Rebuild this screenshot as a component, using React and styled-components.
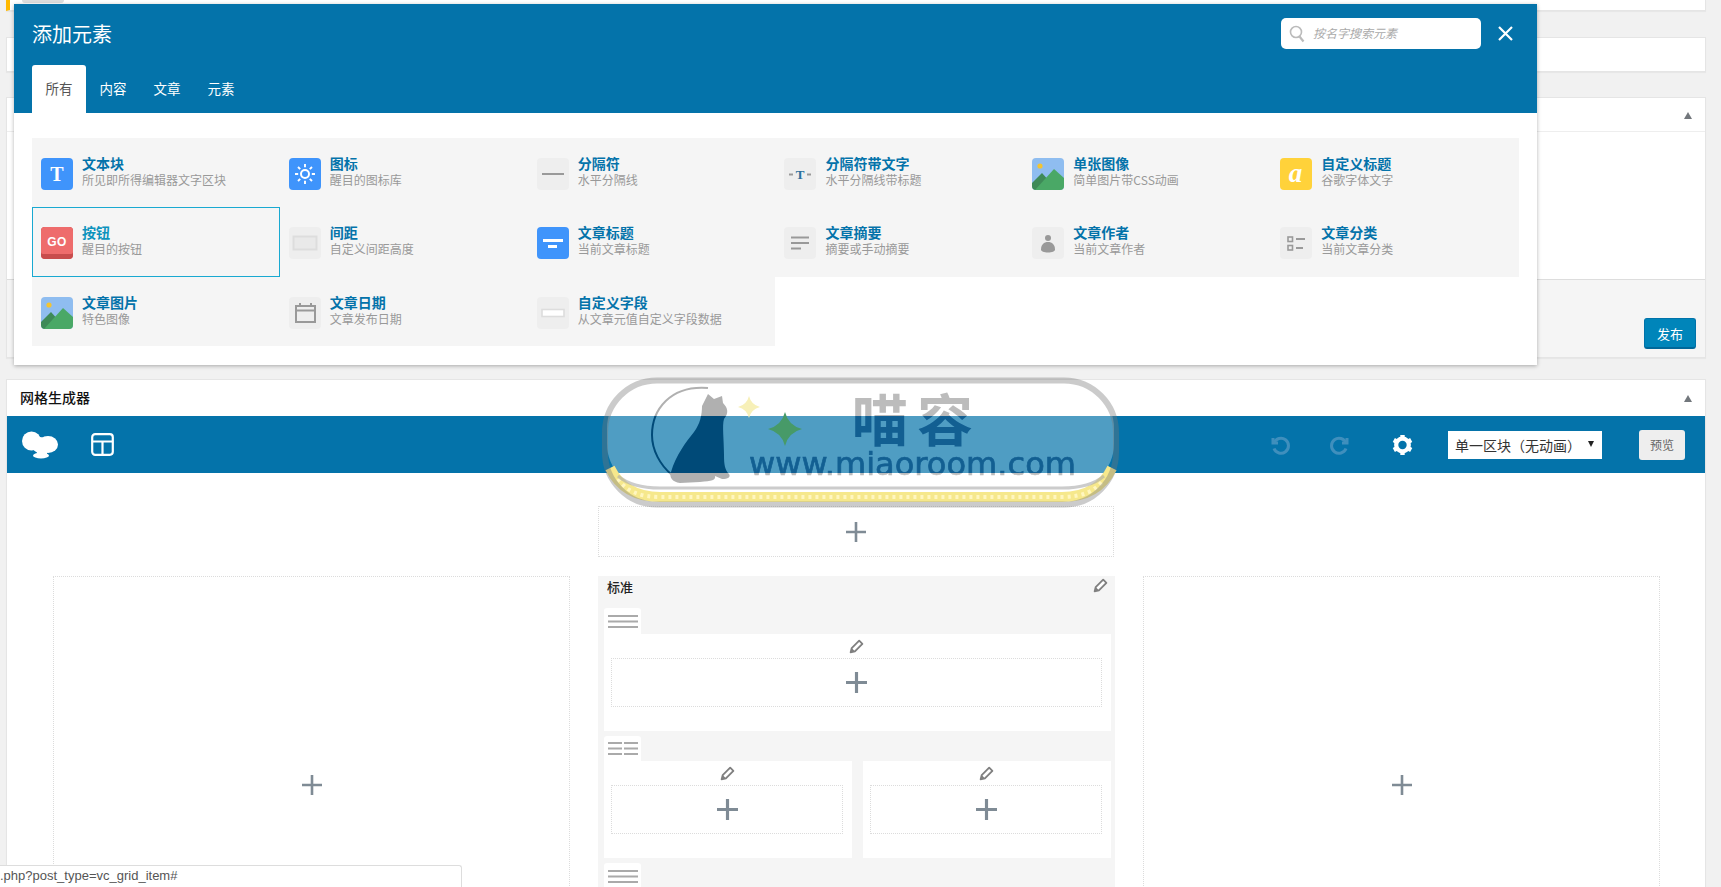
import React from 'react';
import styled, { createGlobalStyle } from 'styled-components';

const GlobalStyle = createGlobalStyle`
  html, body { margin: 0; padding: 0; background: #f1f1f1; }
  body { font-family: "Noto Sans CJK SC", "Liberation Sans", sans-serif; }
  * { box-sizing: border-box; }
`;

const Page = styled.div`
  position: relative;
  height: 887px;
  overflow: hidden;
  padding: 0 15px 0 6px;
  background: #f1f1f1;
`;

const Card = styled.section`
  background: #fff;
  border: 1px solid #e5e5e5;
  box-shadow: 0 1px 1px rgba(0, 0, 0, 0.04);
  margin-top: ${(p) => p.$top || 0}px;
`;

const NoticeCard = styled(Card)`
  height: 11px;
  border-left: 4px solid #ffb900;
  border-top: 0;
  padding-left: 12px;
`;

const GhostButton = styled.div`
  width: 42px;
  height: 3px;
  background: #ddd;
  border-radius: 0 0 3px 3px;
`;

const BlankCard = styled(Card)`
  height: 35px;
`;

const CardHead = styled.header`
  height: ${(p) => p.$h}px;
  display: flex;
  align-items: center;
  justify-content: space-between;
  padding: 0 13px 0 13px;
  border-bottom: ${(p) => (p.$line ? '1px solid #eee' : '0')};
`;

const CardTitle = styled.h3`
  margin: 0 0 3px;
  font-size: 14px;
  font-weight: 500;
  color: #111;
`;

const Toggle = styled.span`
  width: 0;
  height: 0;
  margin-top: ${(p) => p.$down || 0}px;
  border-left: 4px solid transparent;
  border-right: 4px solid transparent;
  border-bottom: 7px solid #72777c;
`;

const CardBody = styled.div`
  height: 147px;
`;

const CardFoot = styled.footer`
  height: 78px;
  background: #f5f5f5;
  border-top: 1px solid #ddd;
  display: flex;
  justify-content: flex-end;
  align-items: flex-end;
  padding: 0 9px 8px;
`;

const Publish = styled.button`
  width: 52px;
  height: 31px;
  padding: 0;
  border: 1px solid #0073aa;
  border-bottom: 2px solid #006799;
  border-radius: 3px;
  background: #0085ba;
  color: #fff;
  font: 13px "Noto Sans CJK SC", sans-serif;
`;

const Toolbar = styled.div`
  height: 57px;
  background: #0473aa;
  display: flex;
  align-items: center;
  padding: 0 20px 0 15px;
`;

const LayoutBtn = styled.span`
  display: flex;
  margin-left: 33px;
`;

const ToolRight = styled.div`
  margin-left: auto;
  display: flex;
  align-items: center;
`;

const HistoryGroup = styled.div`
  display: flex;
  gap: 40px;
  margin-right: 42px;
  color: #3f8fbd;
`;

const GearBtn = styled.span`
  display: flex;
  margin-right: 35px;
`;

const SelectWrap = styled.div`
  position: relative;
  width: 154px;
  height: 28px;
  margin-right: 37px;
  &::after {
    content: '';
    position: absolute;
    right: 8px;
    top: 10px;
    border-left: 3px solid transparent;
    border-right: 3px solid transparent;
    border-top: 6px solid #222;
    pointer-events: none;
  }
`;

const ModeSelect = styled.select`
  width: 100%;
  height: 100%;
  appearance: none;
  border: 0;
  border-radius: 0;
  background: #fff;
  color: #333;
  padding: 0 0 0 7px;
  font: 14px "Noto Sans CJK SC", sans-serif;
`;

const PreviewBtn = styled.button`
  width: 46px;
  height: 30px;
  padding: 0;
  border: 0;
  border-radius: 3px;
  background: #eee;
  color: #666;
  font: 12px "Noto Sans CJK SC", sans-serif;
`;

const Canvas = styled.div`
  height: 500px;
  background: #fff;
  padding-top: 33px;
`;

const DropBox = styled.div`
  display: flex;
  align-items: center;
  justify-content: center;
  border: 1px dotted #dcdcdc;
`;

const TopDrop = styled(DropBox)`
  width: 516px;
  height: 51px;
  margin: 0 auto 19px;
`;

const Columns = styled.div`
  display: grid;
  grid-template-columns: repeat(3, 1fr);
  gap: 28px;
  padding: 0 45px 0 46px;
  height: 400px;
`;

const TallDrop = styled(DropBox)`
  height: 418px;
`;

const MiddleCol = styled.div`
  background: #f5f5f5;
  padding: 0 4px 0 6px;
  height: 420px;
`;

const MiddleHead = styled.div`
  height: 32px;
  display: flex;
  align-items: flex-start;
  justify-content: space-between;
  padding: 2px 3px 0 3px;
  font-size: 13px;
  line-height: 17px;
  font-weight: 500;
  color: #222;
`;

const RowBlock = styled.div`
  margin-bottom: 5px;
`;

const Handle = styled.div`
  width: 37px;
  height: ${(p) => p.$h || 26}px;
  background: #fff;
  border-radius: 3px 3px 0 0;
  display: flex;
  align-items: center;
  justify-content: center;
`;

const RowCols = styled.div`
  display: flex;
  gap: 11px;
`;

const RowCell = styled.div`
  flex: 1;
  height: 97px;
  background: #fff;
  padding: 0 9px 0 7px;
`;

const PencilLine = styled.div`
  height: 24px;
  display: flex;
  align-items: center;
  justify-content: center;
`;

const CellDrop = styled(DropBox)`
  height: 49px;
`;

const Modal = styled.div`
  position: absolute;
  left: 14px;
  top: 4px;
  width: 1523px;
  height: 361px;
  background: #fff;
  box-shadow: 0 1px 4px rgba(0, 0, 0, 0.3);
`;

const ModalHead = styled.div`
  height: 109px;
  background: #0473aa;
  color: #fff;
  padding-left: 18px;
`;

const ModalTop = styled.div`
  height: 61px;
  display: flex;
  align-items: flex-start;
  padding: 14px 24px 0 0;
`;

const ModalTitle = styled.h2`
  margin: 0;
  font-size: 20px;
  font-weight: 400;
  line-height: 31px;
`;

const SearchBox = styled.div`
  margin-left: auto;
  width: 200px;
  height: 31px;
  background: #fff;
  border-radius: 5px;
  display: flex;
  align-items: center;
  gap: 6px;
  padding-left: 8px;
`;

const SearchInput = styled.input`
  flex: 1;
  min-width: 0;
  border: 0;
  outline: 0;
  padding: 0 0 2px 2px;
  background: transparent;
  font: italic 12px "Noto Sans CJK SC", sans-serif;
  &::placeholder { color: #aaa; opacity: 1; }
`;

const CloseBtn = styled.span`
  display: flex;
  margin: 8px 0 0 17px;
`;

const Tabs = styled.div`
  display: flex;
`;

const Tab = styled.div`
  width: 54px;
  height: 48px;
  padding-bottom: 2px;
  display: flex;
  align-items: center;
  justify-content: center;
  border-radius: 3px 3px 0 0;
  font-size: 13.5px;
  background: ${(p) => (p.$on ? '#fff' : 'transparent')};
  color: ${(p) => (p.$on ? '#555' : '#fff')};
`;

const ModalBody = styled.div`
  padding: 25px 18px 0 18px;
`;

const ElementGrid = styled.div`
  display: grid;
  grid-template-columns: repeat(6, 1fr);
  grid-auto-rows: 69.4px;
`;

const Item = styled.div`
  display: flex;
  gap: 9px;
  padding: 17px 8px 0 9px;
  background: #f5f5f5;
  box-shadow: ${(p) => (p.$on ? 'inset 0 0 0 1px #19a9d1' : 'none')};
`;

const IconBox = styled.span`
  flex: none;
  display: flex;
  width: 32px;
  height: 32px;
  margin-top: 3px;
  border-radius: 4px;
  overflow: hidden;
  background: ${(p) => p.$bg || '#eee'};
`;

const ItemText = styled.div`
  min-width: 0;
`;

const ItemTitle = styled.div`
  font-size: 14px;
  font-weight: 700;
  line-height: 17px;
  white-space: nowrap;
  color: ${(p) => (p.$on ? '#0d93bd' : '#0473aa')};
`;

const ItemSub = styled.div`
  font-size: 12px;
  line-height: 16px;
  white-space: nowrap;
  color: #999;
`;

const StatusBar = styled.div`
  position: absolute;
  left: 0;
  bottom: 0;
  width: 462px;
  height: 22px;
  background: #fff;
  border: 1px solid #ddd;
  border-width: 1px 1px 0 0;
  border-radius: 0 3px 0 0;
  font: 13px/20px "Liberation Sans", sans-serif;
  color: #555;
  white-space: nowrap;
`;

const WatermarkArt = styled.svg`
  position: absolute;
  left: 600px;
  top: 376px;
  width: 522px;
  height: 134px;
  pointer-events: none;
  filter: blur(0.5px);
`;

const Svg32 = ({ children }) => (
  <svg width="32" height="32" viewBox="0 0 32 32">{children}</svg>
);

const glyph = { fontFamily: '"Liberation Serif", serif', fontWeight: 700, textAnchor: 'middle' };

const icons = {
  text: (
    <Svg32>
      <text x="16" y="23" fontSize="20" fill="#fff" style={glyph}>T</text>
    </Svg32>
  ),
  sun: (
    <Svg32>
      <circle cx="16" cy="16" r="4" fill="none" stroke="#fff" strokeWidth="2" />
      <path d="M16 6v3.2M16 22.8V26M6 16h3.2M22.8 16H26M9 9l2.2 2.2M20.8 20.8L23 23M9 23l2.2-2.2M20.8 11.2L23 9" stroke="#fff" strokeWidth="1.9" />
    </Svg32>
  ),
  divider: (
    <Svg32>
      <rect x="5" y="15" width="22" height="2" fill="#999" />
    </Svg32>
  ),
  dividerText: (
    <Svg32>
      <path d="M5 16.5h4M23 16.5h4" stroke="#999" strokeWidth="2" />
      <text x="16" y="21" fontSize="13" fill="#2a6f9c" style={glyph}>T</text>
    </Svg32>
  ),
  image: (
    <Svg32>
      <rect width="32" height="32" fill="#8fbdf0" />
      <circle cx="8" cy="8" r="2.6" fill="#f4c430" />
      <path d="M0 25 L10 15 L18 24 L18 32 L0 32Z" fill="#3e8a58" />
      <path d="M3 32 L22 11 L32 20 L32 32Z" fill="#4aa866" />
    </Svg32>
  ),
  heading: (
    <Svg32>
      <text x="15.5" y="24" fontSize="27" fill="#fff" style={{ ...glyph, fontStyle: 'italic' }}>a</text>
    </Svg32>
  ),
  go: (
    <Svg32>
      <rect width="32" height="32" fill="#c84d4d" />
      <rect width="32" height="27" rx="2" fill="#ee6c6c" />
      <text x="16" y="18.6" fontSize="12" letterSpacing="0.5" fill="#fff" style={{ fontFamily: '"Liberation Sans", sans-serif', fontWeight: 700, textAnchor: 'middle' }}>GO</text>
    </Svg32>
  ),
  spacer: (
    <Svg32>
      <rect x="4.5" y="9.5" width="23" height="13" fill="#e9e9e9" stroke="#ddd" strokeWidth="2" />
    </Svg32>
  ),
  postTitle: (
    <Svg32>
      <rect x="6" y="12" width="20" height="3" fill="#fff" />
      <rect x="11" y="18" width="9" height="3" fill="#fff" />
    </Svg32>
  ),
  excerpt: (
    <Svg32>
      <path d="M7 10.5h18M7 16h18M7 21.5h10" stroke="#999" strokeWidth="2" />
    </Svg32>
  ),
  author: (
    <Svg32>
      <circle cx="16" cy="11" r="3" fill="#999" />
      <path d="M9 22.5c0-5 3-7.5 7-7.5s7 2.5 7 7.5c0 2-3 3-7 3s-7-1-7-3z" fill="#999" />
    </Svg32>
  ),
  category: (
    <Svg32>
      <rect x="8" y="10" width="4.5" height="4.5" fill="none" stroke="#999" strokeWidth="1.6" />
      <rect x="8" y="18.5" width="4.5" height="4.5" fill="none" stroke="#999" strokeWidth="1.6" />
      <path d="M16 12h9M16 21h7" stroke="#999" strokeWidth="2" />
    </Svg32>
  ),
  date: (
    <Svg32>
      <rect x="7" y="9" width="19" height="16" fill="none" stroke="#999" strokeWidth="2" />
      <path d="M7 13.5h19M11 6v4M22 6v4" stroke="#999" strokeWidth="2" />
    </Svg32>
  ),
  field: (
    <Svg32>
      <rect x="5" y="12.5" width="22" height="7" fill="#fff" stroke="#ddd" strokeWidth="1.6" />
    </Svg32>
  ),
};

const items = [
  ['text', '#3f94fb', '文本块', '所见即所得编辑器文字区块'],
  ['sun', '#3f94fb', '图标', '醒目的图标库'],
  ['divider', '#eee', '分隔符', '水平分隔线'],
  ['dividerText', '#eee', '分隔符带文字', '水平分隔线带标题'],
  ['image', '#eee', '单张图像', '简单图片带CSS动画'],
  ['heading', '#ffd23a', '自定义标题', '谷歌字体文字'],
  ['go', '#ee6c6c', '按钮', '醒目的按钮', true],
  ['spacer', '#eee', '间距', '自定义间距高度'],
  ['postTitle', '#3f94fb', '文章标题', '当前文章标题'],
  ['excerpt', '#eee', '文章摘要', '摘要或手动摘要'],
  ['author', '#eee', '文章作者', '当前文章作者'],
  ['category', '#eee', '文章分类', '当前文章分类'],
  ['image', '#eee', '文章图片', '特色图像'],
  ['date', '#eee', '文章日期', '文章发布日期'],
  ['field', '#eee', '自定义字段', '从文章元值自定义字段数据'],
];

const Plus = ({ size = 20, w = 2.6 }) => (
  <svg width={size} height={size} viewBox="0 0 20 20">
    <path d="M10 0v20M0 10h20" stroke="#7f8b95" strokeWidth={w} />
  </svg>
);

const Pencil = () => (
  <svg width="15" height="15" viewBox="0 0 14 14">
    <path d="M1.5 12.5l1-4L9.5 1.5l3 3-7 7z" fill="#fff" stroke="#808080" strokeWidth="1.7" strokeLinejoin="round" />
    <path d="M1.5 12.5l1-4 3 3z" fill="#808080" />
  </svg>
);

const Lines = ({ cols = 1 }) => (
  <svg width="30" height="13" viewBox="0 0 30 13">
    {cols === 1 ? (
      <path d="M0 1h30M0 6.5h30M0 12h30" stroke="#aaa" strokeWidth="1.8" />
    ) : (
      <path d="M0 1h14M16 1h14M0 6.5h14M16 6.5h14M0 12h14M16 12h14" stroke="#aaa" strokeWidth="1.8" />
    )}
  </svg>
);

const Cell = () => (
  <RowCell>
    <PencilLine><Pencil /></PencilLine>
    <CellDrop><Plus size={21} w={3} /></CellDrop>
  </RowCell>
);

const Star = ({ x, y, r, fill }) => {
  const c = r * 0.2;
  return (
    <path
      d={`M${x} ${y - r}Q${x + c} ${y - c} ${x + r} ${y}Q${x + c} ${y + c} ${x} ${y + r}Q${x - c} ${y + c} ${x - r} ${y}Q${x - c} ${y - c} ${x} ${y - r}Z`}
      fill={fill}
    />
  );
};

const Watermark = () => (
  <WatermarkArt viewBox="0 0 522 134">
    <defs>
      <linearGradient id="wmCat" gradientUnits="userSpaceOnUse" x1="0" y1="0" x2="0" y2="134">
        <stop offset="0.2985" stopColor="#b0b0b0" />
        <stop offset="0.2985" stopColor="#004a78" />
        <stop offset="0.7239" stopColor="#004a78" />
        <stop offset="0.7239" stopColor="#b0b0b0" />
      </linearGradient>
      <linearGradient id="wmText" gradientUnits="userSpaceOnUse" x1="0" y1="0" x2="0" y2="134">
        <stop offset="0.2985" stopColor="#bcbcbc" />
        <stop offset="0.2985" stopColor="#125f92" />
        <stop offset="0.7239" stopColor="#125f92" />
        <stop offset="0.7239" stopColor="#bcbcbc" />
      </linearGradient>
    </defs>
    <rect x="7" y="6" width="507" height="108" rx="46" fill="#fff" fillOpacity="0.3" />
    <path d="M10 92Q24 121 60 121H462Q498 121 512 92" fill="none" stroke="#f6e88c" strokeWidth="10" />
    <path d="M18 103Q30 121 60 121H462Q492 121 504 103" fill="none" stroke="#fff6c0" strokeWidth="4" strokeDasharray="3 4" />
    <path d="M18 100Q32 112 60 112H462Q490 112 504 100" fill="none" stroke="#aaa" strokeOpacity="0.6" strokeWidth="3" />
    <rect x="5" y="4.5" width="511" height="124" rx="52" fill="none" stroke="#777" strokeOpacity="0.38" strokeWidth="6" />
    <path d="M108 12C70 9 52 34 52 59C52 74 60 89 72 99" fill="none" stroke="url(#wmCat)" strokeWidth="2" />
    <path d="M108 18L114 23L122 20L123 27C128 32 129 37 124 43C122 49 124 64 124 79C124 89 125 94 129 98C131 101 128 103 122 103L115 100C116 104 112 105 100 106L80 107C72 106 69 101 71 96C76 79 86 66 94 56C100 48 102 39 102 30Z" fill="url(#wmCat)" />
    <Star x={149} y={31} r={11} fill="#f7f0b8" />
    <Star x={185} y={53} r={17} fill="#479a68" />
    <text x="252" y="65" fontSize="56" fontWeight="700" letterSpacing="9" fill="url(#wmText)" style={{ fontFamily: '"Noto Sans CJK SC", sans-serif' }}>喵容</text>
    <text x="149" y="99" fontSize="32" textLength="327" lengthAdjust="spacingAndGlyphs" fill="url(#wmText)" stroke="url(#wmText)" strokeWidth="0.7" style={{ fontFamily: '"DejaVu Sans", sans-serif' }}>www.miaoroom.com</text>
  </WatermarkArt>
);

export default function App() {
  return (
    <Page>
      <GlobalStyle />
      <NoticeCard><GhostButton /></NoticeCard>
      <BlankCard $top={26} />
      <Card $top={25}>
        <CardHead $h={34} $line><span /><Toggle $down={2} /></CardHead>
        <CardBody />
        <CardFoot><Publish>发布</Publish></CardFoot>
      </Card>
      <Card $top={21}>
        <CardHead $h={36}><CardTitle>网格生成器</CardTitle><Toggle /></CardHead>
        <Toolbar>
          <svg width="36" height="28" viewBox="0 0 36 28">
            <circle cx="9.5" cy="10" r="9.5" fill="#fff" />
            <ellipse cx="26" cy="13.5" rx="10" ry="8.5" fill="#fff" />
            <ellipse cx="18" cy="14" rx="8" ry="8" fill="#fff" />
            <ellipse cx="19" cy="24.5" rx="8" ry="3" fill="#fff" />
            <rect x="15" y="18" width="10" height="5" fill="#fff" />
          </svg>
          <LayoutBtn>
            <svg width="23" height="23" viewBox="0 0 23 23">
              <rect x="1.2" y="1.2" width="20.6" height="20.6" rx="3" fill="none" stroke="#fff" strokeWidth="2.2" />
              <path d="M1.2 8.5h20.6M11.5 8.5v13" stroke="#fff" strokeWidth="2.2" />
            </svg>
          </LayoutBtn>
          <ToolRight>
            <HistoryGroup>
              <svg width="20" height="20" viewBox="0 0 20 20" fill="none" stroke="currentColor" strokeWidth="3">
                <path d="M3 3v5h5" />
                <path d="M4 8a7.5 7.5 0 1 1 0 5.5" />
              </svg>
              <svg width="20" height="20" viewBox="0 0 20 20" fill="none" stroke="currentColor" strokeWidth="3">
                <path d="M17 3v5h-5" />
                <path d="M16 8a7.5 7.5 0 1 0 0 5.5" />
              </svg>
            </HistoryGroup>
            <GearBtn>
              <svg width="21" height="22" viewBox="0 0 21 22">
                <circle cx="10.5" cy="11" r="6.3" fill="none" stroke="#fff" strokeWidth="4.2" />
                <path d="M10.5 1v4M10.5 17v4M1.8 6l3.5 2M15.7 14l3.5 2M1.8 16l3.5-2M15.7 8l3.5-2" stroke="#fff" strokeWidth="4.4" />
              </svg>
            </GearBtn>
            <SelectWrap>
              <ModeSelect defaultValue="a">
                <option value="a">单一区块（无动画）</option>
              </ModeSelect>
            </SelectWrap>
            <PreviewBtn>预览</PreviewBtn>
          </ToolRight>
        </Toolbar>
        <Canvas>
          <TopDrop><Plus /></TopDrop>
          <Columns>
            <TallDrop><Plus /></TallDrop>
            <MiddleCol>
              <MiddleHead>标准<Pencil /></MiddleHead>
              <RowBlock>
                <Handle><Lines /></Handle>
                <RowCols><Cell /></RowCols>
              </RowBlock>
              <RowBlock>
                <Handle $h={25}><Lines cols={2} /></Handle>
                <RowCols><Cell /><Cell /></RowCols>
              </RowBlock>
              <RowBlock>
                <Handle><Lines /></Handle>
              </RowBlock>
            </MiddleCol>
            <TallDrop><Plus /></TallDrop>
          </Columns>
        </Canvas>
      </Card>

      <Watermark />

      <Modal>
        <ModalHead>
          <ModalTop>
            <ModalTitle>添加元素</ModalTitle>
            <SearchBox>
              <svg width="16" height="18" viewBox="0 0 16 18" fill="none" stroke="#bbb" strokeWidth="1.6">
                <circle cx="7" cy="7" r="5.5" />
                <path d="M10.5 11.5l4 5" strokeWidth="2.2" />
              </svg>
              <SearchInput placeholder="按名字搜索元素" />
            </SearchBox>
            <CloseBtn>
              <svg width="15" height="15" viewBox="0 0 15 15">
                <path d="M1 1l13 13M14 1L1 14" stroke="#fff" strokeWidth="2.2" />
              </svg>
            </CloseBtn>
          </ModalTop>
          <Tabs>
            <Tab $on>所有</Tab>
            <Tab>内容</Tab>
            <Tab>文章</Tab>
            <Tab>元素</Tab>
          </Tabs>
        </ModalHead>
        <ModalBody>
          <ElementGrid>
            {items.map(([icon, bg, title, sub, on]) => (
              <Item key={title} $on={on}>
                <IconBox $bg={bg}>{icons[icon]}</IconBox>
                <ItemText>
                  <ItemTitle $on={on}>{title}</ItemTitle>
                  <ItemSub>{sub}</ItemSub>
                </ItemText>
              </Item>
            ))}
          </ElementGrid>
        </ModalBody>
      </Modal>

      <StatusBar>.php?post_type=vc_grid_item#</StatusBar>
    </Page>
  );
}
